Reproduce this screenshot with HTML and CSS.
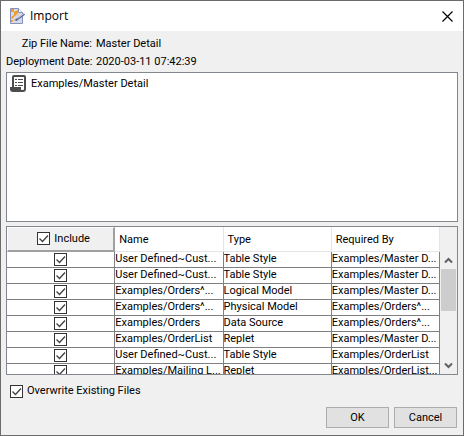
FILE: index.html
```html
<!DOCTYPE html>
<html lang="en">
<head>
<meta charset="utf-8">
<title>Import</title>
<link rel="stylesheet" href="styles.css">
</head>
<body>
<main class="dialog">
  <header class="titlebar">
    <svg class="app-icon" width="16" height="18" viewBox="0 0 16 18" aria-hidden="true">
      <path d="M1.500 1.500h8l4 4v11h-12z" fill="#d3daf0" stroke="#8791b4"/>
      <path d="M9.500 1.500v4h4" fill="#fff" stroke="#8791b4"/>
      <path d="M2 2h3v3H2zM5 5l4-2v3L6 9l-3 3-1-2 3-2zM2 13h2v2H2z" fill="#f59a23"/>
      <path d="M3 14.500l4-2.500M8 8.500l2-1" stroke="#f9bf6c"/>
      <path d="M6.500 13.500L15.500 7" stroke="#59658c" stroke-width="2"/>
      <path d="M8.500 11.500L15 6.500" stroke="#c3cde8"/>
    </svg>
    <h1 class="title">Import</h1>
    <button class="close" type="button" aria-label="Close">
      <svg width="11" height="11" viewBox="0 0 11 11" aria-hidden="true"><path d="M.5.5l10 10M10.500.5l-10 10" stroke="#000" stroke-width="1.200"/></svg>
    </button>
  </header>
  <form class="content">
    <dl class="details">
      <dt>Zip File Name:</dt><dd>Master Detail</dd>
      <dt>Deployment Date:</dt><dd>2020-03-11 07:42:39</dd>
    </dl>
    <ul class="panel assets">
      <li class="asset">
        <svg width="17" height="18" viewBox="0 0 17 18" aria-hidden="true">
          <path d="M3 13V2Q3 1 4 1H14Q15 1 15 2V14Q15 16 13 16H11" fill="#fff" stroke="#4d4d4d" stroke-width="2"/>
          <path d="M0 12H11V14Q11 15 12 15.500V17H3Q0 17 0 14z" fill="#4d4d4d"/>
          <path d="M5 4.500h2M8 4.500h5M5 7.500h2M8 7.500h5M5 10.500h2M8 10.500h5" stroke="#4d4d4d"/>
        </svg>
        <span>Examples/Master Detail</span>
      </li>
    </ul>
    <div class="panel grid-panel">
      <div class="viewport">
        <table class="grid">
          <thead>
            <tr>
              <th class="include" scope="col"><label class="check"><input type="checkbox" checked>Include</label></th>
              <th scope="col">Name</th>
              <th scope="col">Type</th>
              <th scope="col">Required By</th>
            </tr>
          </thead>
          <tbody>
            <tr><td><input type="checkbox" aria-label="Include row 1" checked></td><td>User Defined~Cust...</td><td>Table Style</td><td>Examples/Master D...</td></tr>
            <tr><td><input type="checkbox" aria-label="Include row 2" checked></td><td>User Defined~Cust...</td><td>Table Style</td><td>Examples/Master D...</td></tr>
            <tr><td><input type="checkbox" aria-label="Include row 3" checked></td><td>Examples/Orders^...</td><td>Logical Model</td><td>Examples/Master D...</td></tr>
            <tr><td><input type="checkbox" aria-label="Include row 4" checked></td><td>Examples/Orders^...</td><td>Physical Model</td><td>Examples/Orders^...</td></tr>
            <tr><td><input type="checkbox" aria-label="Include row 5" checked></td><td>Examples/Orders</td><td>Data Source</td><td>Examples/Orders^...</td></tr>
            <tr><td><input type="checkbox" aria-label="Include row 6" checked></td><td>Examples/OrderList</td><td>Replet</td><td>Examples/Master D...</td></tr>
            <tr><td><input type="checkbox" aria-label="Include row 7" checked></td><td>User Defined~Cust...</td><td>Table Style</td><td>Examples/OrderList</td></tr>
            <tr><td><input type="checkbox" aria-label="Include row 8" checked></td><td>Examples/Mailing L...</td><td>Replet</td><td>Examples/OrderList...</td></tr>
          </tbody>
        </table>
      </div>
      <div class="scrollbar" aria-hidden="true">
        <svg class="arrow" width="17" height="17" viewBox="0 0 17 17"><path d="M5 10.500l3.500-3.500 3.500 3.500" fill="none" stroke="#606060" stroke-width="2"/></svg>
        <div class="thumb"></div>
        <svg class="arrow down" width="17" height="17" viewBox="0 0 17 17"><path d="M5 6.500l3.500 3.500 3.500-3.500" fill="none" stroke="#606060" stroke-width="2"/></svg>
      </div>
    </div>
    <label class="check overwrite"><input type="checkbox" checked>Overwrite Existing Files</label>
    <footer class="actions">
      <button class="button" type="button">OK</button>
      <button class="button" type="button">Cancel</button>
    </footer>
  </form>
</main>
</body>
</html>
```
FILE: styles.css
```css
* { box-sizing: border-box; }

body {
  margin: 0;
  font: 11px/16px Tahoma, Roboto, sans-serif;
  color: #000;
}

.dialog {
  display: flex;
  flex-direction: column;
  height: 100vh;
  border: 1px solid #6b6b6b;
  background: #f0f0f0;
}

.titlebar {
  display: flex;
  align-items: center;
  height: 30px;
  padding: 0 10px 0 8px;
  background: #fff;
}

.title {
  flex: 1;
  margin: 0 0 0 5px;
  font: 12px/16px "Open Sans", sans-serif;
}

.close {
  display: flex;
  padding: 0;
  border: 0;
  background: none;
}

.content {
  display: flex;
  flex: 1;
  flex-direction: column;
  min-height: 0;
  padding: 4px 5px 7px;
}

.details {
  display: grid;
  grid-template-columns: 86px 1fr;
  column-gap: 4px;
  margin: 0 0 1px;
  line-height: 18px;
}

.details dt { text-align: right; white-space: nowrap; }
.details dd { margin: 0; }

.panel {
  flex: 1 1 0;
  min-height: 0;
  border: 1px solid #828790;
  background: #fff;
}

.assets {
  margin: 0 0 4px;
  padding: 0;
  list-style: none;
}

.asset {
  display: flex;
  align-items: center;
  gap: 4px;
  padding: 2px 3px;
}

.grid-panel { display: flex; }

.viewport {
  flex: 1;
  min-width: 0;
  overflow: hidden;
}

.grid {
  width: 100%;
  table-layout: fixed;
  border-collapse: separate;
  border-spacing: 0;
}

.grid th {
  height: 25px;
  padding: 3px 4px 0;
  border-right: 1px solid #e5e5e5;
  border-bottom: 1px solid #e5e5e5;
  font-weight: normal;
  text-align: left;
}

.grid .include {
  padding: 0 0 0 6px;
  border: 1px solid #fff;
  border-right: 2px solid #a0a0a0;
  border-bottom: 2px solid #a0a0a0;
  background: #f0f0f0;
}

.grid .include .check { justify-content: center; }

.grid td {
  height: 16px;
  padding: 0;
  border-right: 1px solid #808080;
  border-bottom: 1px solid #808080;
  line-height: 14px;
  vertical-align: top;
  white-space: nowrap;
  overflow: hidden;
}

input[type="checkbox"] {
  display: block;
  flex: none;
  appearance: none;
  width: 13px;
  height: 13px;
  margin: 0;
  border: 1px solid #333;
  background: #fff url("data:image/svg+xml,%3Csvg xmlns='http://www.w3.org/2000/svg' viewBox='0 0 11 11'%3E%3Cpath d='M1.500 5.500l3 3 5.500-6' fill='none' stroke='%23404040' stroke-width='1.300'/%3E%3C/svg%3E") center / 11px 11px no-repeat;
}

.grid td input[type="checkbox"] { margin: 1px auto; }

.check {
  display: flex;
  align-items: center;
  gap: 4px;
}

.scrollbar {
  display: flex;
  flex-direction: column;
  width: 17px;
  padding-top: 25px;
  background: #f0f0f0;
}

.arrow { display: block; flex: none; }
.thumb { height: 42px; margin: 0 1px; background: #cdcdcd; }
.down { margin-top: auto; }

.overwrite {
  align-self: flex-start;
  margin: 8px 0 0 4px;
}

.actions {
  display: flex;
  justify-content: flex-end;
  gap: 5px;
  padding: 8px 1px 0;
}

.button {
  width: 63px;
  height: 21px;
  padding: 0;
  border: 1px solid #adadad;
  background: #e1e1e1;
  color: inherit;
  font: inherit;
}
```
